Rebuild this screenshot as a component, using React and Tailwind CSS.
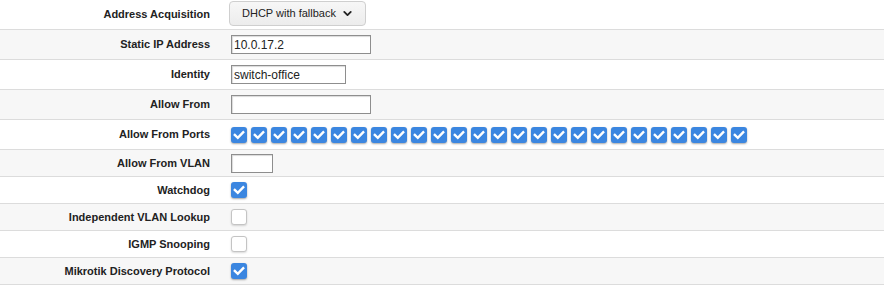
import { ChevronDown } from "lucide-react";

const font = { fontFamily: '"Liberation Sans", Arial, sans-serif' };

function Check({ on }) {
  if (!on) {
    return (
      <span className="inline-block w-4 h-4 rounded-[3px] bg-white border border-[#c4c4c4] shadow-[0_1px_2px_rgba(0,0,0,0.15)]" />
    );
  }
  return (
    <span className="inline-flex items-center justify-center w-4 h-4 rounded-[3px] bg-[#3b86e0] shadow-[0_1px_2px_rgba(0,0,0,0.35)]">
      <svg width="12" height="10" viewBox="0 0 12 10">
        <polyline points="1.8,5 4.8,7.8 10.2,2.2" fill="none" stroke="white" strokeWidth="2.4" strokeLinecap="square" />
      </svg>
    </span>
  );
}

function Input({ value = "", width }) {
  return (
    <input
      readOnly
      value={value}
      style={{ ...font, width }}
      className="h-[19px] border border-[#8e8e8e] bg-white px-[2px] text-[12px] text-[#222] shadow-[inset_1px_1px_1px_rgba(0,0,0,0.15)] outline-none"
    />
  );
}

function Row({ label, gray, h = "h-[30px]", children }) {
  return (
    <div className={`flex items-center border-b border-[#dcdcdc] ${h} ${gray ? "bg-[#f7f7f7]" : "bg-white"}`}>
      <div className="w-[210px] shrink-0 text-right text-[11px] font-bold text-[#222]">{label}</div>
      <div className="pl-[21px] flex items-center">{children}</div>
    </div>
  );
}

export default function App() {
  const ports = Array.from({ length: 26 });
  return (
    <div style={font} className="w-[884px] h-[287px] bg-white">
      <Row label="Address Acquisition">
        <button
          style={font}
          className="-ml-[2px] -mt-[2px] h-[25px] w-[137px] flex items-center justify-center gap-[5px] pl-[1px] rounded-[4px] border border-[#cfcfcf] bg-gradient-to-b from-[#f7f7f7] to-[#ececec] text-[11px] text-[#222]"
        >
          DHCP with fallback
          <ChevronDown size={13} strokeWidth={3.4} />
        </button>
      </Row>
      <Row label="Static IP Address" gray>
        <Input value="10.0.17.2" width={140} />
      </Row>
      <Row label="Identity">
        <Input value="switch-office" width={115} />
      </Row>
      <Row label="Allow From" gray>
        <Input width={140} />
      </Row>
      <Row label="Allow From Ports">
        <div className="flex gap-1">
          {ports.map((_, i) => (
            <Check key={i} on />
          ))}
        </div>
      </Row>
      <Row label="Allow From VLAN" gray h="h-[27px]">
        <Input width={42} />
      </Row>
      <Row label="Watchdog" h="h-[27px]">
        <Check on />
      </Row>
      <Row label="Independent VLAN Lookup" gray h="h-[27px]">
        <Check />
      </Row>
      <Row label="IGMP Snooping" h="h-[27px]">
        <Check />
      </Row>
      <Row label="Mikrotik Discovery Protocol" gray h="h-[27px]">
        <Check on />
      </Row>
    </div>
  );
}
